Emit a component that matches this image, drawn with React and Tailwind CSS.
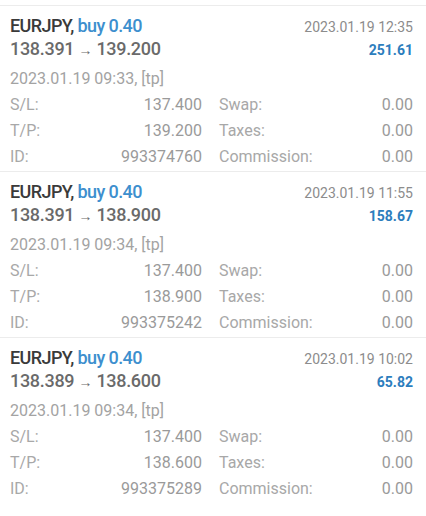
import React from "react";

const deals = [
  { close: "139.200", closeTime: "2023.01.19 12:35", profit: "251.61", open: "2023.01.19 09:33", sl: "137.400", tp: "139.200", id: "993374760", openPrice: "138.391" },
  { close: "138.900", closeTime: "2023.01.19 11:55", profit: "158.67", open: "2023.01.19 09:34", sl: "137.400", tp: "138.900", id: "993375242", openPrice: "138.391" },
  { close: "138.600", closeTime: "2023.01.19 10:02", profit: "65.82", open: "2023.01.19 09:34", sl: "137.400", tp: "138.600", id: "993375289", openPrice: "138.389" },
];

function Pair({ label, value }) {
  return (
    <div className="flex justify-between items-center h-[26px]">
      <span className="text-[#a8a8a8]">{label}</span>
      <span className="text-[#9a9a9a]">{value}</span>
    </div>
  );
}

function Card({ d }) {
  return (
    <div className="h-[166px] border-t border-[#ececec] pl-[10px] pr-[13px] pt-[9px]">
      <div className="flex justify-between items-baseline leading-[22px]">
        <div className="text-[18px] font-medium tracking-[-0.6px]">
          <span className="text-[#3a3a3a]">EURJPY,</span>{" "}
          <span className="text-[#3d8fce]">buy 0.40</span>
        </div>
        <div className="text-[14px] text-[#8c8c8c]">{d.closeTime}</div>
      </div>
      <div className="flex justify-between items-baseline leading-[22px]">
        <div className="text-[18px] font-medium text-[#6a6a6a] tracking-[-0.3px]">
          {d.openPrice} <span className="text-[14px]">→</span> {d.close}
        </div>
        <div className="text-[14px] font-bold text-[#2c7dbd]">{d.profit}</div>
      </div>
      <div className="mt-[6px] leading-[24px] text-[16px] text-[#a3a3a3]">
        {d.open}, [tp]
      </div>
      <div className="grid grid-cols-[192px_1fr] gap-x-[17px] text-[16px] mt-[1px]">
        <div>
          <Pair label="S/L:" value={d.sl} />
          <Pair label="T/P:" value={d.tp} />
          <Pair label="ID:" value={d.id} />
        </div>
        <div>
          <Pair label="Swap:" value="0.00" />
          <Pair label="Taxes:" value="0.00" />
          <Pair label="Commission:" value="0.00" />
        </div>
      </div>
    </div>
  );
}

export default function App() {
  return (
    <div className="w-[426px] h-[516px] bg-white overflow-hidden pt-[5px] font-['Roboto',sans-serif] relative">
      {deals.map((d, i) => (
        <Card key={i} d={d} />
      ))}
    </div>
  );
}
